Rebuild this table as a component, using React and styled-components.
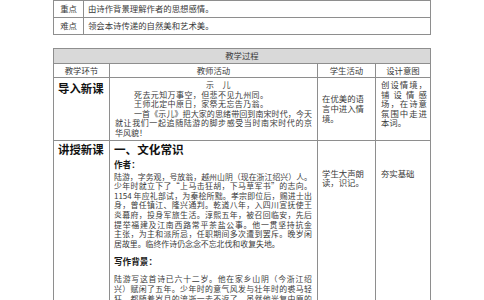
import React from 'react';
import styled, { createGlobalStyle } from 'styled-components';

// ============================================
// STYLED COMPONENTS
// ============================================

const GlobalStyle = createGlobalStyle`
  html, body {
    margin: 0;
    padding: 0;
    background: #fff;
    overflow: hidden;
  }
  body {
    font-family: "Noto Sans CJK SC", "Liberation Serif", serif;
    color: #3a3a3a;
  }
`;

const Page = styled.div`
  width: 484px;
  height: 300px;
  overflow: hidden;
  padding-left: 53px;
  box-sizing: border-box;
`;

const Table = styled.table`
  width: 378px;
  table-layout: fixed;
  border-collapse: collapse;
  border: 1px solid #7a7a7a;
  margin-bottom: ${props => props.$gap || 0}px;
`;

const Cell = styled.td`
  border: 1px solid #8e8e8e;
  padding: ${props => props.$pad || '0 4px'};
  height: ${props => props.$h ? props.$h + 'px' : 'auto'};
  font-size: 8.4px;
  line-height: 9.6px;
  vertical-align: ${props => props.$valign || 'top'};
  text-align: ${props => props.$align || 'left'};
  box-sizing: border-box;
  overflow: hidden;
`;

const TitleCell = styled(Cell)`
  background: #d9d9d9;
  text-align: center;
  vertical-align: middle;
`;

const Spread = styled(Cell)`
  text-align: justify;
`;

const Stage = styled.div`
  font-size: 11.4px;
  line-height: 15px;
  font-weight: 700;
  color: #111;
  white-space: nowrap;
`;

const SectionTitle = styled.div`
  font-size: 11.6px;
  line-height: 15px;
  font-weight: 700;
  color: #111;
`;

const SubTitle = styled.div`
  font-size: 8.6px;
  line-height: 10px;
  font-weight: 700;
  color: #1a1a1a;
  margin-top: ${props => props.$top || 0}px;
`;

const Para = styled.div`
  margin-top: ${props => props.$top || 0}px;
  font-size: 7.9px;
`;

const Line = styled.div`
  font-size: ${props => props.$size || 'inherit'};
  text-align: justify;
  text-align-last: ${props => props.$last ? 'left' : 'justify'};
  text-indent: ${props => props.$indent || 0}px;
  white-space: nowrap;
`;

const Poem = styled.div`
  font-size: 8px;
  letter-spacing: 0.4px;
`;

const PoemTitle = styled.div`
  text-align: center;
  padding-left: 10px;
  word-spacing: 6px;
`;

const PoemLine = styled.div`
  padding-left: 19px;
`;

// ============================================
// DATA
// ============================================

const author = [
  '陆游，字务观，号放翁，越州山阴（现在浙江绍兴）人。',
  '少年时就立下了“上马击狂胡，下马草军书”的志向。',
  '1154 年应礼部试，为秦桧所黜。孝宗即位后，赐进士出',
  '身，曾任镇江、隆兴通判。乾道八年，入四川宣抚使王',
  '炎幕府，投身军旅生活。淳熙五年，被召回临安，先后',
  '提举福建及江南西路常平茶盐公事。他一贯坚持抗金',
  '主张，为主和派所忌，任职期间多次遭到罢斥。晚岁闲',
  '居故里。临终作诗仍念念不忘北伐和收复失地。'
];

const background = [
  '陆游写这首诗已六十二岁。他在家乡山阴（今浙江绍',
  '兴）赋闲了五年。少年时的意气风发与壮年时的裘马轻',
  '狂，都随着岁月的流逝一去不返了。虽然他光复中原的',
  '信念始终不渝，但对南宋朝廷的苟安早已深感失望。'
];

function Lines({ lines }) {
  return lines.map((text, i) => (
    <Line key={i} $last={i === lines.length - 1}>{text}</Line>
  ));
}

// ============================================
// REACT
// ============================================

export default function App() {
  return (
    <Page>
      <GlobalStyle />
      <Table $gap={13}>
        <colgroup>
          <col style={{ width: 30 }} />
          <col />
        </colgroup>
        <tbody>
          <tr>
            <Cell $h={17} $align="center" $valign="middle" $pad="0">重点</Cell>
            <Cell $h={17} $valign="middle">由诗作背景理解作者的思想感情。</Cell>
          </tr>
          <tr>
            <Cell $h={17} $align="center" $valign="middle" $pad="0">难点</Cell>
            <Cell $h={17} $valign="middle">领会本诗传递的自然美和艺术美。</Cell>
          </tr>
        </tbody>
      </Table>

      <Table>
        <colgroup>
          <col style={{ width: 56 }} />
          <col style={{ width: 208 }} />
          <col style={{ width: 58 }} />
          <col />
        </colgroup>
        <tbody>
          <tr>
            <TitleCell colSpan={4} $h={15}>教学过程</TitleCell>
          </tr>
          <tr>
            <Cell $h={14} $align="center" $valign="middle">教学环节</Cell>
            <Cell $h={14} $align="center" $valign="middle">教师活动</Cell>
            <Cell $h={14} $align="center" $valign="middle">学生活动</Cell>
            <Cell $h={14} $align="center" $valign="middle">设计意图</Cell>
          </tr>
          <tr>
            <Cell $h={61} $pad="3px 4px">
              <Stage>导入新课</Stage>
            </Cell>
            <Cell $h={61} $pad="2px 5px">
              <Poem>
                <PoemTitle>示 儿</PoemTitle>
                <PoemLine>死去元知万事空，但悲不见九州同。</PoemLine>
                <PoemLine>王师北定中原日，家祭无忘告乃翁。</PoemLine>
              </Poem>
              <Line $size="8px" $indent={19}>一首《示儿》把大家的思绪带回到南宋时代，今天</Line>
              <Line $size="8px">就让我们一起追随陆游的脚步感受当时南宋时代的京</Line>
              <Line $size="8px" $last>华风貌！</Line>
            </Cell>
            <Spread $h={61} $valign="middle" $pad="0 11px 0 4px">
              在优美的语言中进入情境。
            </Spread>
            <Spread $h={61} $pad="2px 3px 0 5px">
              创设情境，铺设情感场，在诗意氛围中走进本词。
            </Spread>
          </tr>
          <tr>
            <Cell $pad="1px 4px">
              <Stage>讲授新课</Stage>
            </Cell>
            <Cell $pad="1px 5px 0 4px">
              <SectionTitle>一、文化常识</SectionTitle>
              <SubTitle $top={2}>作者：</SubTitle>
              <Para $top={3}>
                <Lines lines={author} />
              </Para>
              <SubTitle $top={8}>写作背景：</SubTitle>
              <Para $top={8}>
                <Lines lines={background} />
              </Para>
            </Cell>
            <Spread $pad="28px 11px 0 4px">学生大声朗读，识记。</Spread>
            <Spread $pad="28px 3px 0 5px">夯实基础</Spread>
          </tr>
        </tbody>
      </Table>
    </Page>
  );
}
